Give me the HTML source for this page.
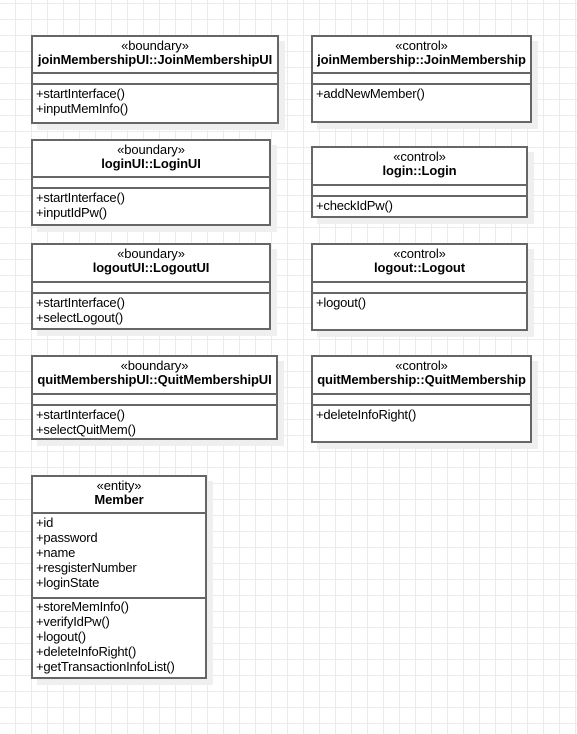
<!DOCTYPE html>
<html><head><meta charset="utf-8"><style>
html,body{margin:0;padding:0}
body{width:577px;height:734px;position:relative;overflow:hidden;background-color:#fff;
background-image:linear-gradient(to right,#ebebeb 1px,transparent 1px),linear-gradient(to bottom,#ebebeb 1px,transparent 1px);
background-size:16px 16px;background-position:15px 3px;
font-family:"Liberation Sans",Arial,sans-serif;font-size:13px;color:#000}
.b{position:absolute;border:2px solid #666;background:#fff;box-shadow:6px 6px 0 #efefef;box-sizing:border-box}
.t{text-align:center;line-height:14px;padding-top:2px;border-bottom:2px solid #666;box-sizing:border-box;white-space:nowrap;letter-spacing:-0.1px}
.t b{font-weight:bold}
.e{height:9px;border-bottom:2px solid #666}
.m{padding:1px 0 0 3px;line-height:15px;letter-spacing:-0.2px}
</style></head><body>
<div class="b" style="left:31px;top:35px;width:248px;height:89px"><div class="t" style="height:37px">«boundary»<br><b>joinMembershipUI::JoinMembershipUI</b></div><div class="e"></div><div class="m">+startInterface()<br>+inputMemInfo()</div></div>
<div class="b" style="left:311px;top:35px;width:221px;height:88px"><div class="t" style="height:37px">«control»<br><b>joinMembership::JoinMembership</b></div><div class="e"></div><div class="m">+addNewMember()</div></div>
<div class="b" style="left:31px;top:139px;width:240px;height:87px"><div class="t" style="height:37px">«boundary»<br><b>loginUI::LoginUI</b></div><div class="e"></div><div class="m">+startInterface()<br>+inputIdPw()</div></div>
<div class="b" style="left:311px;top:146px;width:217px;height:72px"><div class="t" style="height:38px">«control»<br><b>login::Login</b></div><div class="e"></div><div class="m">+checkIdPw()</div></div>
<div class="b" style="left:31px;top:243px;width:240px;height:87px"><div class="t" style="height:38px">«boundary»<br><b>logoutUI::LogoutUI</b></div><div class="e"></div><div class="m">+startInterface()<br>+selectLogout()</div></div>
<div class="b" style="left:311px;top:243px;width:217px;height:88px"><div class="t" style="height:38px">«control»<br><b>logout::Logout</b></div><div class="e"></div><div class="m">+logout()</div></div>
<div class="b" style="left:31px;top:355px;width:247px;height:85px"><div class="t" style="height:38px">«boundary»<br><b>quitMembershipUI::QuitMembershipUI</b></div><div class="e"></div><div class="m">+startInterface()<br>+selectQuitMem()</div></div>
<div class="b" style="left:311px;top:355px;width:221px;height:88px"><div class="t" style="height:38px">«control»<br><b>quitMembership::QuitMembership</b></div><div class="e"></div><div class="m">+deleteInfoRight()</div></div>
<div class="b" style="left:31px;top:475px;width:176px;height:204px"><div class="t" style="height:37px">«entity»<br><b>Member</b></div><div class="m" style="height:82px;border-bottom:2px solid #666;padding-top:1px">+id<br>+password<br>+name<br>+resgisterNumber<br>+loginState</div><div class="m" style="padding-top:0">+storeMemInfo()<br>+verifyIdPw()<br>+logout()<br>+deleteInfoRight()<br>+getTransactionInfoList()</div></div>
</body></html>
